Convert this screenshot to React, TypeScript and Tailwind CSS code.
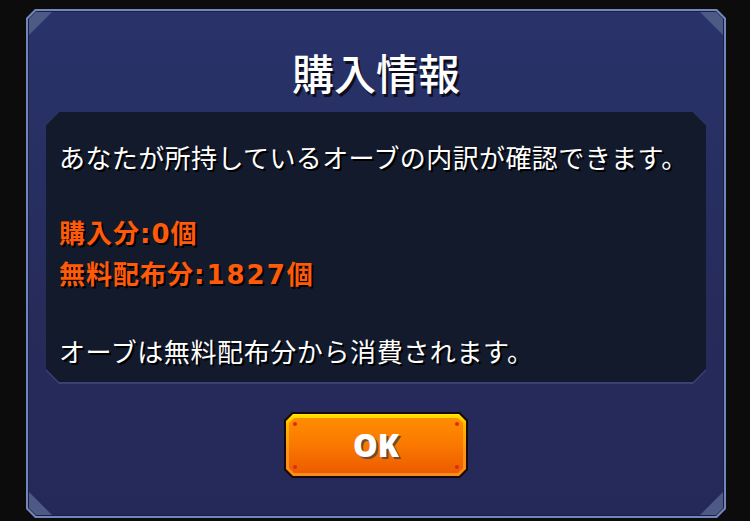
import React from "react";

const cjk = "font-['Noto_Sans_CJK_JP','Noto_Sans',sans-serif]";
const num = "font-['DejaVu_Sans','Noto_Sans_CJK_JP',sans-serif]";

function Corner({ pos }: { pos: "tl" | "tr" | "bl" | "br" }) {
  const place =
    pos === "tl"
      ? "left-0 top-0 [clip-path:polygon(0_0,100%_0,0_100%)]"
      : pos === "tr"
      ? "right-0 top-0 [clip-path:polygon(0_0,100%_0,100%_100%)]"
      : pos === "bl"
      ? "left-0 bottom-0 [clip-path:polygon(0_0,100%_100%,0_100%)]"
      : "right-0 bottom-0 [clip-path:polygon(100%_0,100%_100%,0_100%)]";
  return <span className={`pointer-events-none absolute h-[23px] w-[23px] bg-[#4d5a86] ${place}`} />;
}

function Dot({ cls }: { cls: string }) {
  return <span className={`absolute h-[4px] w-[4px] rounded-full bg-[#e02a14] ${cls}`} />;
}

export default function App() {
  return (
    <div className="h-[521px] w-[750px] overflow-hidden bg-[#0c0c0d] pl-[26px] pt-[9px]">
      {/* panel outer border */}
      <div className="h-[509px] w-[700px] bg-[#7386b8] p-[2px] [clip-path:polygon(9px_0,calc(100%_-_9px)_0,100%_9px,100%_calc(100%_-_9px),calc(100%_-_9px)_100%,9px_100%,0_calc(100%_-_9px),0_9px)]">
        <div className="h-full w-full bg-[#1b2046] p-px [clip-path:polygon(8px_0,calc(100%_-_8px)_0,100%_8px,100%_calc(100%_-_8px),calc(100%_-_8px)_100%,8px_100%,0_calc(100%_-_8px),0_8px)]">
          <div className="relative flex h-full w-full flex-col bg-[linear-gradient(to_bottom,#29336a,#262b5a_60%,#25295a)] [clip-path:polygon(7px_0,calc(100%_-_7px)_0,100%_7px,100%_calc(100%_-_7px),calc(100%_-_7px)_100%,7px_100%,0_calc(100%_-_7px),0_7px)]">
            <Corner pos="tl" />
            <Corner pos="tr" />
            <Corner pos="bl" />
            <Corner pos="br" />

            {/* title */}
            <div
              className={`${cjk} pt-[39px] pb-[19px] text-center text-[42px] font-medium leading-[42px] text-white [text-shadow:2px_3px_0_#0b0e1e]`}
            >
              購入情報
            </div>

            {/* inner box */}
            <div className="mx-[17px] h-[272px] bg-[#3a4274] pb-[2px] [clip-path:polygon(13px_0,calc(100%_-_13px)_0,100%_13px,100%_calc(100%_-_13px),calc(100%_-_13px)_100%,13px_100%,0_calc(100%_-_13px),0_13px)]">
              <div
                className={`${cjk} h-full bg-[#131a2c] pl-[13px] pt-[26px] text-[26px] leading-[37.5px] text-white [text-shadow:2px_2px_0_#000] [clip-path:polygon(13px_0,calc(100%_-_13px)_0,100%_13px,100%_calc(100%_-_13px),calc(100%_-_13px)_100%,13px_100%,0_calc(100%_-_13px),0_13px)]`}
              >
                <p className="whitespace-nowrap tracking-[0.4px]">あなたが所持しているオーブの内訳が確認できます。</p>
                <p>&nbsp;</p>
                <p className="whitespace-nowrap font-bold tracking-[1px] text-[#ff5a0a]">
                  購入分<span className={num}>:0</span>個
                </p>
                <p className="whitespace-nowrap font-bold tracking-[1px] text-[#ff5a0a]">
                  無料配布分<span className={`${num} tracking-[2px]`}>:1827</span>個
                </p>
                <p>&nbsp;</p>
                <p className="whitespace-nowrap tracking-[0.6px]">オーブは無料配布分から消費されます。</p>
              </div>
            </div>

            {/* button */}
            <div className="mt-[28px] flex justify-center">
              <button className="relative h-[66px] w-[184px] bg-[#160a02] p-[2px] [clip-path:polygon(8px_0,calc(100%_-_8px)_0,100%_8px,100%_calc(100%_-_8px),calc(100%_-_8px)_100%,8px_100%,0_calc(100%_-_8px),0_8px)]">
                <div className="h-full w-full bg-[linear-gradient(to_bottom,#ffe600,#ffb400_20%,#ff9414_60%,#f98a20)] px-[3px] pb-[3px] pt-[4px] [clip-path:polygon(7px_0,calc(100%_-_7px)_0,100%_7px,100%_calc(100%_-_7px),calc(100%_-_7px)_100%,7px_100%,0_calc(100%_-_7px),0_7px)]">
                  <div className="relative flex h-full w-full items-center justify-center bg-[linear-gradient(to_bottom,#ff8c00,#fb7a00_45%,#ec5c00)] [clip-path:polygon(5px_0,calc(100%_-_5px)_0,100%_5px,100%_calc(100%_-_5px),calc(100%_-_5px)_100%,5px_100%,0_calc(100%_-_5px),0_5px)]">
                    <Dot cls="left-[4px] top-[4px]" />
                    <Dot cls="right-[4px] top-[4px]" />
                    <Dot cls="left-[4px] bottom-[4px]" />
                    <Dot cls="right-[4px] bottom-[4px]" />
                    <span className="font-['Noto_Sans',sans-serif] text-[31px] font-black leading-none text-white [text-shadow:2px_2px_0_#6a4a3a]">
                      OK
                    </span>
                  </div>
                </div>
              </button>
            </div>
          </div>
        </div>
      </div>
    </div>
  );
}
